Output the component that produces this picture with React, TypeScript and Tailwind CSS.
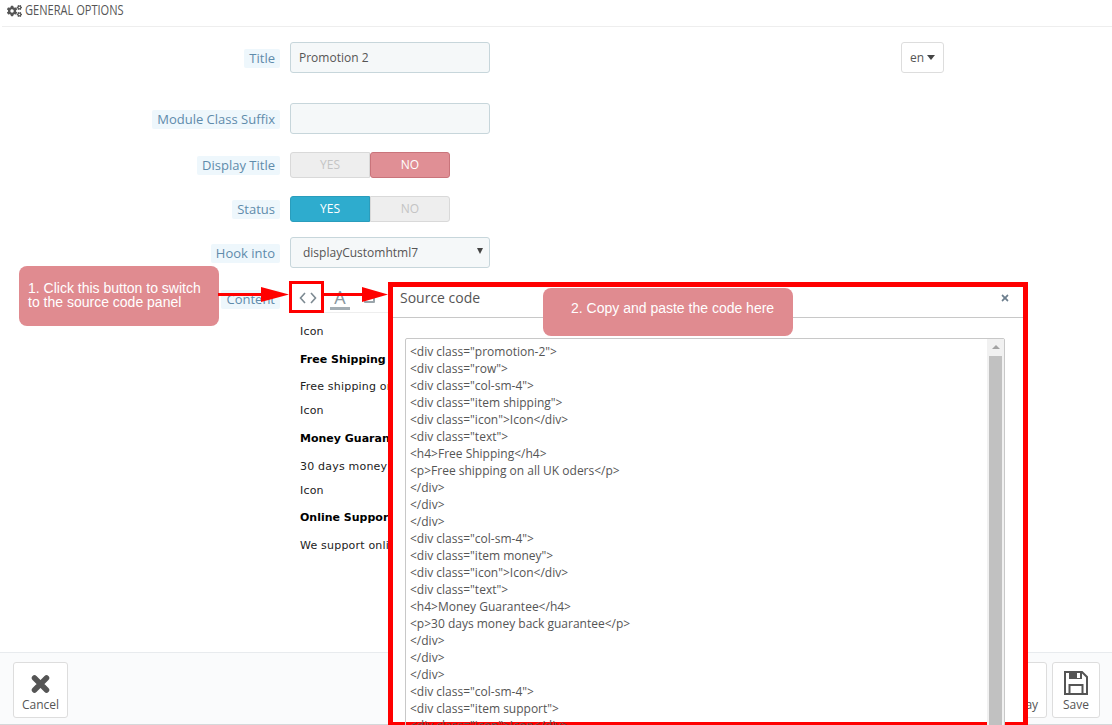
import { ReactNode } from 'react';
import { FaCogs, FaTimes } from 'react-icons/fa';

const codeLines = [
  '<div class="promotion-2">',
  '<div class="row">',
  '<div class="col-sm-4">',
  '<div class="item shipping">',
  '<div class="icon">Icon</div>',
  '<div class="text">',
  '<h4>Free Shipping</h4>',
  '<p>Free shipping on all UK oders</p>',
  '</div>',
  '</div>',
  '</div>',
  '<div class="col-sm-4">',
  '<div class="item money">',
  '<div class="icon">Icon</div>',
  '<div class="text">',
  '<h4>Money Guarantee</h4>',
  '<p>30 days money back guarantee</p>',
  '</div>',
  '</div>',
  '</div>',
  '<div class="col-sm-4">',
  '<div class="item support">',
  '<div class="icon">Icon</div>',
];

function Label({ children, nudge }: { children: ReactNode; nudge?: boolean }) {
  return (
    <div className={`flex w-[280px] shrink-0 justify-end ${nudge ? 'pt-[2px]' : ''}`}>
      <span className="rounded-[2px] bg-[#eef7fc] px-[5px] text-[13px] leading-[19px] text-[#5f8bab]">{children}</span>
    </div>
  );
}

function Toggle({ on }: { on: boolean }) {
  return (
    <div className="ml-[10px] flex h-[26px] w-[160px] text-[12px] font-medium leading-[24px]">
      <div
        className={
          on
            ? 'w-[80px] rounded-l-[3px] border border-[#2a9dbc] bg-[#2eacce] text-center text-white'
            : 'w-[80px] rounded-l-[3px] border border-[#d9d9d9] bg-[#eeeeee] text-center text-[#c4c4c4]'
        }
      >
        YES
      </div>
      <div
        className={
          on
            ? 'w-[80px] rounded-r-[3px] border border-[#d9d9d9] bg-[#eeeeee] text-center text-[#c4c4c4]'
            : 'w-[80px] rounded-[3px] border border-[#c9747b] bg-[#e08f95] text-center text-white'
        }
      >
        NO
      </div>
    </div>
  );
}

function EditorText({ children, bold, top }: { children: ReactNode; bold?: boolean; top: string }) {
  return (
    <p className={`${top} whitespace-nowrap font-['DejaVu_Sans',sans-serif] text-[11px] leading-[14px] ${bold ? 'font-bold text-black' : 'tracking-[0.2px] text-[#222222]'}`}>
      {children}
    </p>
  );
}

function SaveIcon() {
  return (
    <svg viewBox="0 0 24 24" className="h-[24px] w-[24px]" fill="none" stroke="#555555" strokeWidth="2">
      <path d="M1 1h17l5 5v17H1z" />
      <path d="M5 1h13v7H5z" fill="#555555" stroke="none" />
      <path d="M13 2h3v5h-3z" fill="#ffffff" stroke="none" />
      <path d="M5.500 23v-9h13v9" />
    </svg>
  );
}

export default function App() {
  return (
    <div className="relative flex h-[725px] w-[1112px] flex-col overflow-hidden bg-white font-['Open_Sans',sans-serif] text-[#555555]">
      <div className="ml-[2px] flex h-[27px] items-start gap-[3px] border-b border-[#eeeeee] pl-[5px] pt-[2px]">
        <FaCogs className="mt-[2px] h-[14px] w-[15px] text-[#555555]" />
        <span className="origin-left scale-x-[0.79] whitespace-nowrap text-[14px] leading-[16px] text-[#555555]">GENERAL OPTIONS</span>
      </div>

      <div className="mt-[15px] flex h-[31px] items-center">
        <Label nudge>Title</Label>
        <div className="ml-[10px] flex h-[31px] w-[200px] items-center rounded-[3px] border border-[#c7d6db] bg-[#f5f8f9] pl-[8px] text-[12px]">
          Promotion 2
        </div>
        <div className="ml-[411px] flex h-[31px] w-[43px] items-center justify-center gap-[3px] rounded-[3px] border border-[#dddddd] bg-white text-[12px]">
          en
          <span className="h-0 w-0 border-x-[4.5px] border-t-[5px] border-x-transparent border-t-[#444444]" />
        </div>
      </div>

      <div className="mt-[30px] flex h-[31px] items-center">
        <Label nudge>Module Class Suffix</Label>
        <div className="ml-[10px] h-[31px] w-[200px] rounded-[3px] border border-[#c7d6db] bg-[#f5f8f9]" />
      </div>

      <div className="mt-[18px] flex h-[26px] items-center">
        <Label>Display Title</Label>
        <Toggle on={false} />
      </div>

      <div className="mt-[18px] flex h-[26px] items-center">
        <Label>Status</Label>
        <Toggle on />
      </div>

      <div className="mt-[15px] flex h-[31px] items-center">
        <Label nudge>Hook into</Label>
        <div className="ml-[10px] flex h-[31px] w-[200px] items-center justify-between rounded-[3px] border border-[#c7d6db] bg-[#f5f8f9] pl-[12px] pr-[6px] pt-[1px] text-[12px]">
          displayCustomhtml7
          <span className="mb-[4px] h-0 w-0 border-x-[3.5px] border-t-[6px] border-x-transparent border-t-[#444444]" />
        </div>
      </div>

      <div className="mt-[15px] flex items-start">
        <div className="mt-[7px]">
          <Label>Content</Label>
        </div>
        <div className="ml-[10px] w-[600px]">
          <div className="flex h-[30px] items-center border-b border-[#eeeeee] pl-[9px]">
            <svg viewBox="0 0 18 12" className="h-[12px] w-[18px]" fill="none" stroke="#7d8a92" strokeWidth="1.6">
              <path d="M6 1 1.500 6 6 11M12 1l4.500 5-4.500 5" />
            </svg>
            <div className="ml-[13px] flex w-[20px] flex-col items-center pt-[2px]">
              <span className="text-[18px] leading-[19px] text-[#8a969e]">A</span>
              <span className="h-[3px] w-[20px] bg-[#a3adb3]" />
            </div>
            <span className="ml-[14px] mt-[3px] h-[8px] w-[11px] rounded-[1px] border-2 border-[#9aa5ab]" />
          </div>
          <div className="pl-[10px]">
            <EditorText top="mt-[12px]">Icon</EditorText>
            <EditorText top="mt-[14px]" bold>Free Shipping</EditorText>
            <EditorText top="mt-[13px]">Free shipping on all UK oders</EditorText>
            <EditorText top="mt-[10px]">Icon</EditorText>
            <EditorText top="mt-[14px]" bold>Money Guarantee</EditorText>
            <EditorText top="mt-[14px]">30 days money back guarantee</EditorText>
            <EditorText top="mt-[10px]">Icon</EditorText>
            <EditorText top="mt-[13px]" bold>Online Support</EditorText>
            <EditorText top="mt-[14px]">We support online 24 hours a day</EditorText>
          </div>
        </div>
      </div>

      <div className="mt-auto flex h-[73px] items-start justify-between border-y border-y-[#e8ebee] border-b-[#d5d8da] bg-[#fafbfc] pl-[13px] pr-[12px] pt-[9px]">
        <div className="flex h-[56px] w-[55px] flex-col items-center rounded-[3px] border border-[#dddddd] bg-white pt-[12px] text-[12px]">
          <svg viewBox="0 0 19 18" className="h-[18px] w-[19px]" fill="none" stroke="#555555" strokeWidth="5.500" strokeLinecap="round">
            <path d="M3.500 3 15.500 15M15.500 3 3.500 15" />
          </svg>
          <span className="mt-[4px] leading-[16px]">Cancel</span>
        </div>
        <div className="flex gap-[5px]">
          <div className="flex h-[56px] w-[95px] flex-col items-center rounded-[3px] border border-[#dddddd] bg-white pt-[8px] text-[12px]">
            <SaveIcon />
            <span className="mt-[2px] whitespace-nowrap leading-[16px]">Save and Stay</span>
          </div>
          <div className="flex h-[56px] w-[48px] flex-col items-center rounded-[3px] border border-[#dddddd] bg-white pt-[8px] text-[12px]">
            <SaveIcon />
            <span className="mt-[2px] leading-[16px]">Save</span>
          </div>
        </div>
      </div>

      {/* source code dialog, drawn over the form */}
      <div className="absolute left-[388px] top-[282px] h-[445px] w-[640px] border-[5px] border-[#ff0000] bg-white">
        <div className="flex h-[31px] items-start justify-between border-b border-[#c8c8c8] pl-[7px] pr-[13px] pt-[1px]">
          <span className="text-[14px] leading-[20px] text-[#555555]">Source code</span>
          <FaTimes className="mt-[5px] h-[10px] w-[10px] text-[#6d7f8e]" />
        </div>
        <div className="ml-[12px] mt-[20px] flex h-[400px] w-[600px] justify-between rounded-[2px] border border-[#c8c8c8] pl-[4px] pt-[4px]">
          <div className="text-[12px] leading-[17px] text-[#555555]">
            {codeLines.map((line, i) => (
              <div key={i} className="whitespace-pre">{line}</div>
            ))}
          </div>
          <div className="-mt-[4px] flex w-[17px] flex-col items-center bg-[#f1f1f1]">
            <span className="mt-[6px] h-0 w-0 border-x-[4px] border-b-[4px] border-x-transparent border-b-[#a3a3a3]" />
            <div className="mt-[7px] h-[380px] w-[13px] bg-[#c1c1c1]" />
          </div>
        </div>
      </div>

      {/* annotations */}
      <div className="absolute left-[19px] top-[266px] h-[60px] w-[200px] rounded-[8px] bg-[#e08b90] pl-[9px] pt-[15px] font-['Liberation_Sans',sans-serif] text-[14px] leading-[14px] text-white">
        1. Click this button to switch
        <br />
        to the source code panel
      </div>
      <div className="absolute left-[543px] top-[288px] h-[48px] w-[250px] rounded-[8px] bg-[#e08b90] pl-[28px] pt-[12px] font-['Liberation_Sans',sans-serif] text-[14px] leading-[16px] text-white">
        2. Copy and paste the code here
      </div>
      <div className="absolute left-[289px] top-[281px] h-[32px] w-[35px] border-[3px] border-[#ff0000]" />
      <svg className="absolute left-[218px] top-[284px]" width="172" height="21" viewBox="0 0 172 21" fill="#ff0000">
        <path d="M0 9h43V3l28 7.500-28 7.500v-6H0z" />
        <path d="M106 9h38V3l26 7.500-26 7.500v-6h-38z" />
      </svg>
    </div>
  );
}
